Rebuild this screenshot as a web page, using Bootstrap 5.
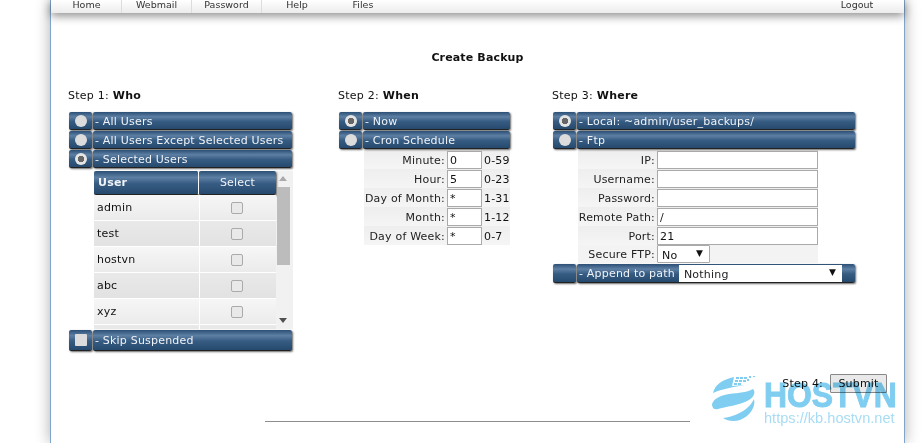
<!DOCTYPE html>
<html lang="en"><head><meta charset="utf-8"><title>Create Backup</title>
<link href="https://cdn.jsdelivr.net/npm/bootstrap@5.3.0/dist/css/bootstrap.min.css" rel="stylesheet">
<style>
html,body{height:443px;overflow:hidden;background:#fff}
body{font-family:"DejaVu Sans",Verdana,sans-serif;font-size:11px;color:#111;line-height:1.2}
.sheet{position:relative;margin:0 18px 0 50px;height:443px;border-left:1px solid #7fa5cb;border-right:1px solid #7fa5cb;background:#fff;box-shadow:0 0 14px rgba(0,0,0,.32)}
.topbar{height:13px;overflow:hidden;background:linear-gradient(#fff,#ececec);box-shadow:0 3px 10px rgba(0,0,0,.45);padding-left:1px;color:#333;font-size:9.5px}
.tab{width:70px;height:13px;text-align:center;line-height:9px;border-right:1px solid #ddd}
.tab:nth-child(n+4){border-right:0}
.tab:nth-child(5){margin-left:-4px}
.tab-out{margin-left:auto;width:70px;margin-right:12px;text-align:center;line-height:9px}
.page-title{margin:0;padding-top:38px;height:50px;font-size:11px;font-weight:700;text-align:center;line-height:13px;letter-spacing:.15px}
.cols{padding:26px 0 0 17px;height:311px}
.col-a{width:270px;padding-right:46px}.col-b{width:214px;padding-right:42px}.col-c{width:304px;padding-right:1px}
.step{height:23px;margin:0;font-size:11px;line-height:13px;letter-spacing:.25px}
.line{display:flex;margin-left:1px;margin-bottom:1px;height:18px}
.knob{width:23px;flex:none;margin-right:1px;border-radius:2px}
.bar{flex:1;padding:1px 0 0 2px;color:#f0f3f7;font-size:11px;line-height:17px;letter-spacing:.2px;border-radius:2px;white-space:nowrap}
.knob,.bar,.head-cell{background:linear-gradient(#2c4f76 0,#5d7fa3 28%,#375c83 55%,#264a6e 100%);border-bottom:1px solid #222;box-shadow:1px 1px 2px rgba(0,0,0,.6)}
.knob{display:flex;align-items:center;justify-content:center}
.dot{width:12px;height:12px;border-radius:50%;background:#dcdcdc;display:block}
.dot-on{background:radial-gradient(circle,#666 0 3px,#e4e4e4 3.5px)}
.sq{width:12px;height:12px;background:#dcdcdc;border-radius:1px;display:block}
.userbox{margin:3px 0 0 26px;width:199px;height:158px;overflow:hidden;background:#f1f1f1;display:flex}
.usertab{width:182px;flex:none;border-collapse:separate;border-spacing:0;table-layout:fixed}
.head-cell{height:24px;color:#f0f3f7;font-size:11px;font-weight:400;text-align:center;border-radius:2px;letter-spacing:.2px}
.head-cell:first-child{width:105px;text-align:left;padding-left:4px;font-weight:700;border-right:1px solid #fff}
.usertab td{height:26px;padding:0 0 0 3px;border-bottom:1px solid #fff;letter-spacing:.2px;line-height:13px;background:linear-gradient(#f6f6f6,#ebebeb)}
.usertab tr:nth-child(even) td{background:linear-gradient(#e9e9e9,#e2e2e2)}
.usertab td+td{border-left:1px solid #fff;text-align:center;padding:0 2px 0 0}
.tick{display:inline-block;width:12px;height:12px;border:1px solid #aaa;border-radius:2px;background:#e9e9e9;vertical-align:middle}
.track{flex:1;position:relative;padding:16px 2px 0 1px}
.thumb{display:block;height:78px;background:#bcbcbc;width:13px}
.up,.down{position:absolute;left:3px;width:0;height:0;border-left:4px solid transparent;border-right:4px solid transparent}
.up{top:5px;border-bottom:5px solid #aaa}.down{bottom:6px;border-top:5px solid #505050}
.skip{height:21px;margin-top:1px}
.skip .bar{line-height:20px}
.form-grid{margin-top:1px;background:#efefef}
.frow{display:flex;align-items:center;height:19px;background:linear-gradient(#eee,#f5f5f5)}
.flabel{text-align:right;padding:2px 2px 0 0;flex:none;letter-spacing:.2px;white-space:nowrap;color:#222}
.fbox{height:18px;border:1px solid #aaa;background:#fff;padding:1px 2px 0;line-height:16px;flex:none;letter-spacing:.2px}
.frange{padding:2px 0 0 2px;letter-spacing:.2px;white-space:nowrap}
.when{margin-left:26px;width:146px}
.when .flabel{width:83px}.when .fbox{width:35px}
.where{margin-left:26px;width:240px}
.where .flabel{width:79px}.where .fbox{width:161px}
.drop{background:#fff;border:1px solid #aaa;height:18px;width:53px;display:flex;justify-content:space-between;padding:1px 6px 0 4px;line-height:17px;letter-spacing:.2px;border-radius:1px}
.where .frow:last-child{height:18px;background:#f3f3f3}
.where .frow:last-child .flabel{padding-top:1px}
.tri{font-size:9px;color:#111;line-height:13px}
.append{margin-top:1px;height:19px}
.append .bar{display:flex;align-items:center;padding:1px 13px 0 2px;gap:4px;line-height:19px}
.drop-wide{background:#fff;flex:1;height:17px;display:flex;justify-content:space-between;padding:1px 6px 0 5px;color:#222;line-height:18px}
.send{justify-content:flex-end;align-items:center;padding-right:17px;height:19px;gap:7px;letter-spacing:.2px}
.send-btn{width:57px;height:19px;padding:0;border:1px solid #888;background:#e9e9e9;border-radius:1px;font-size:11px;color:#111;font-family:inherit;letter-spacing:.2px}
.rule{width:425px;margin:28px auto 0;border:0;border-top:1px solid #8d8d8d;opacity:1}
.wm{position:absolute;left:661px;top:375px;width:190px;height:50px;mix-blend-mode:multiply;color:#7fcdf0;pointer-events:none}
.wm svg{position:absolute;left:0;top:0}
.wm-name{position:absolute;left:52px;top:1px;font:700 35px/38px "Liberation Sans",sans-serif;white-space:nowrap;-webkit-text-stroke:1px #7fcdf0;transform:scaleX(.91);transform-origin:left top}
.wm-url{position:absolute;left:52px;top:34px;font:14.6px/18px "Liberation Sans",sans-serif;white-space:nowrap;color:#a8dcf4}
</style></head><body>
<div class="sheet">
  <div class="topbar d-flex">
    <div class="tab">Home</div><div class="tab">Webmail</div><div class="tab">Password</div><div class="tab">Help</div><div class="tab">Files</div><div class="tab-out">Logout</div>
  </div>
  <h1 class="page-title">Create Backup</h1>
  <div class="cols d-flex">
    <div class="col-a">
      <p class="step">Step 1: <b>Who</b></p>
      <div class="line"><span class="knob"><i class="dot"></i></span><div class="bar">- All Users</div></div>
      <div class="line"><span class="knob"><i class="dot"></i></span><div class="bar">- All Users Except Selected Users</div></div>
      <div class="line"><span class="knob"><i class="dot dot-on"></i></span><div class="bar">- Selected Users</div></div>
      <div class="userbox">
        <table class="usertab">
          <thead><tr><th class="head-cell">User</th><th class="head-cell">Select</th></tr></thead>
          <tbody>
            <tr><td>admin</td><td><i class="tick"></i></td></tr>
            <tr><td>test</td><td><i class="tick"></i></td></tr>
            <tr><td>hostvn</td><td><i class="tick"></i></td></tr>
            <tr><td>abc</td><td><i class="tick"></i></td></tr>
            <tr><td>xyz</td><td><i class="tick"></i></td></tr>
            <tr><td>&nbsp;</td><td></td></tr>
          </tbody>
        </table>
        <div class="track"><i class="up"></i><i class="thumb"></i><i class="down"></i></div>
      </div>
      <div class="line skip"><span class="knob"><i class="sq"></i></span><div class="bar">- Skip Suspended</div></div>
    </div>
    <div class="col-b">
      <p class="step">Step 2: <b>When</b></p>
      <div class="line"><span class="knob"><i class="dot dot-on"></i></span><div class="bar">- Now</div></div>
      <div class="line"><span class="knob"><i class="dot"></i></span><div class="bar">- Cron Schedule</div></div>
      <div class="form-grid when">
        <div class="frow"><span class="flabel">Minute:</span><span class="fbox">0</span><span class="frange">0-59</span></div>
        <div class="frow"><span class="flabel">Hour:</span><span class="fbox">5</span><span class="frange">0-23</span></div>
        <div class="frow"><span class="flabel">Day of Month:</span><span class="fbox">*</span><span class="frange">1-31</span></div>
        <div class="frow"><span class="flabel">Month:</span><span class="fbox">*</span><span class="frange">1-12</span></div>
        <div class="frow"><span class="flabel">Day of Week:</span><span class="fbox">*</span><span class="frange">0-7</span></div>
      </div>
    </div>
    <div class="col-c">
      <p class="step">Step 3: <b>Where</b></p>
      <div class="line"><span class="knob"><i class="dot dot-on"></i></span><div class="bar">- Local: ~admin/user_backups/</div></div>
      <div class="line"><span class="knob"><i class="dot"></i></span><div class="bar">- Ftp</div></div>
      <div class="form-grid where">
        <div class="frow"><span class="flabel">IP:</span><span class="fbox"></span></div>
        <div class="frow"><span class="flabel">Username:</span><span class="fbox"></span></div>
        <div class="frow"><span class="flabel">Password:</span><span class="fbox"></span></div>
        <div class="frow"><span class="flabel">Remote Path:</span><span class="fbox">/</span></div>
        <div class="frow"><span class="flabel">Port:</span><span class="fbox">21</span></div>
        <div class="frow"><span class="flabel">Secure FTP:</span><span class="drop">No <span class="tri">▼</span></span></div>
      </div>
      <div class="line append"><span class="knob"></span><div class="bar">- Append to path <span class="drop-wide">Nothing <span class="tri">▼</span></span></div></div>
    </div>
  </div>
  <div class="send d-flex"><span>Step 4:</span><button type="button" class="send-btn">Submit</button></div>
  <hr class="rule">
  <div class="wm">
    <svg width="46" height="48" viewBox="0 0 46 48" fill="#7fcdf0"><path d="M1 18C3 10 9 5 22 2L20 11 33 10C22 12 10 14 1 18z"/><path d="M0 29C2 23 10 20 17 19 27 18 36 17 41 14 44 17 42 22 37 25 29 30 12 32 6 34 2 35 0 33 0 29z"/><path d="M11 43C20 42 36 37 42 24 44 32 38 41 28 45 22 47 15 46 11 43z"/><path d="M24 2h3v2h-3zM28 2h3v2h-3zM32 2h3v2h-3zM37 1h2v2h-2zM41 1h2v1h-2zM23 5h3v2h-3zM27 5h3v2h-3zM31 5h3v2h-3zM35 4h2v2h-2zM22 8h3v2h-3zM26 8h3v2h-3z"/></svg>
    <span class="wm-name">HOSTVN</span>
    <span class="wm-url">https://kb.hostvn.net</span>
  </div>
</div>
<script src="https://cdn.jsdelivr.net/npm/bootstrap@5.3.0/dist/js/bootstrap.bundle.min.js"></script>
</body></html>
